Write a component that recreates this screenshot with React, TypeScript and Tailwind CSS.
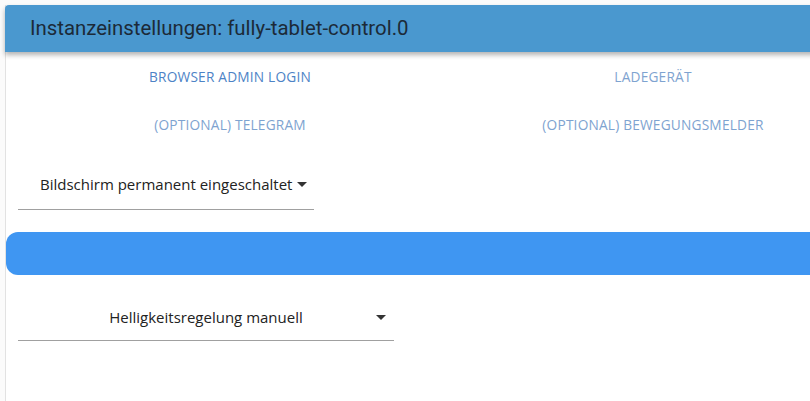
import React from 'react';

function Caret() {
  return (
    <svg width="10" height="5" viewBox="0 0 10 5" className="shrink-0">
      <path d="M0 0 L10 0 L5 5 Z" fill="#333" />
    </svg>
  );
}

function Tab({ label, active }: { label: string; active?: boolean }) {
  return (
    <div
      className={`flex h-12 items-center justify-center text-[13.7px] uppercase tracking-[0.2px] ${
        active ? 'text-[#4d83c6]' : 'text-[#7ea3d0]'
      }`}
    >
      {label}
    </div>
  );
}

export default function App() {
  return (
    <div className="h-[401px] w-[810px] overflow-hidden bg-[#fbfbfb] pl-[5px] pt-[5px] font-['Open_Sans',sans-serif]">
      <div className="h-full border-l border-[#e2e2e2] bg-white">
        {/* header */}
        <div className="relative z-10 -ml-px flex h-[47px] w-[830px] items-center rounded-tl-[4px] bg-[#4a98cf] pl-[25px] shadow-[0_3px_5px_rgba(0,0,0,0.3)]">
          <span className="font-['Roboto',sans-serif] text-[20.4px] text-[#1c2a38]">
            Instanzeinstellungen: fully-tablet-control.0
          </span>
        </div>

        {/* tabs */}
        <div className="grid grid-cols-[448px_398px] pt-[1px]">
          <Tab label="Browser Admin Login" active />
          <Tab label="Ladegerät" />
          <Tab label="(optional) Telegram" />
          <Tab label="(optional) Bewegungsmelder" />
        </div>

        {/* first select */}
        <div className="ml-[12px] mt-[14px] flex h-[47px] w-[296px] items-center gap-[5px] border-b border-[#a0a0a0] pb-[4px] pl-[22px] text-[15px] text-[#222]">
          <span>Bildschirm permanent eingeschaltet</span>
          <Caret />
        </div>

        {/* blue bar */}
        <div className="mt-[22px] h-[43px] w-[830px] rounded-l-[12px] bg-[#3f96f2]" />

        {/* second select */}
        <div className="relative ml-[12px] mt-[24px] flex h-[42px] w-[376px] items-center justify-center border-b border-[#a0a0a0] pb-[5px] text-[15px] text-[#222]">
          <span>Helligkeitsregelung manuell</span>
          <span className="absolute right-[8px] top-[16px]">
            <Caret />
          </span>
        </div>
      </div>
    </div>
  );
}
